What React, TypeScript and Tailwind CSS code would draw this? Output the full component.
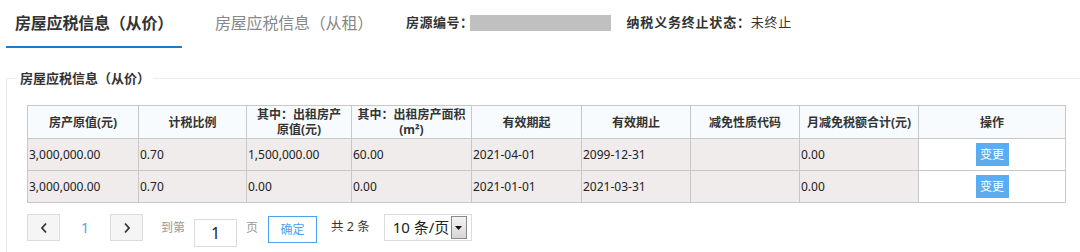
import React from "react";

const font = { fontFamily: '"Noto Sans", "Noto Sans CJK SC", sans-serif' };

const cols = [111, 108, 105, 120, 110, 109, 109, 119, 147];

const headers: React.ReactNode[] = [
  "房产原值(元)",
  "计税比例",
  <>其中：出租房产<br />原值(元)</>,
  <>其中：出租房产面积<br />(m²)</>,
  "有效期起",
  "有效期止",
  "减免性质代码",
  "月减免税额合计(元)",
  "操作",
];

const rows = [
  ["3,000,000.00", "0.70", "1,500,000.00", "60.00", "2021-04-01", "2099-12-31", "", "0.00"],
  ["3,000,000.00", "0.70", "0.00", "0.00", "2021-01-01", "2021-03-31", "", "0.00"],
];

function Chevron({ dir }: { dir: "l" | "r" }) {
  return (
    <svg width="8" height="12" viewBox="0 0 8 12">
      <path
        d={dir === "l" ? "M6 1.5 L2 6 L6 10.5" : "M2 1.5 L6 6 L2 10.5"}
        fill="none"
        stroke="#333"
        strokeWidth="1.8"
      />
    </svg>
  );
}

export default function App() {
  return (
    <div className="w-[1080px] h-[252px] overflow-hidden bg-white text-[#333]" style={font}>
      {/* Tabs */}
      <div className="flex h-[48px] items-stretch">
        <div className="ml-[6px] w-[176px] border-b-2 border-[#1a7bd0] pl-[9px] flex items-center text-[16px] font-bold text-[#333] tracking-[-0.2px]">
          房屋应税信息（从价）
        </div>
        <div className="ml-[33px] flex items-center text-[16px] text-[#888] pb-[2px] tracking-[-0.2px]">
          房屋应税信息（从租）
        </div>
        <div className="ml-[33px] flex items-center pb-[3px] text-[13px] font-bold text-[#333]">
          <span className="tracking-[0.5px]">房源编号：</span>
          <span className="ml-[-4px] inline-block w-[141px] h-[16px] bg-[#c0c0c0]" />
          <span className="ml-[16px] tracking-[0.8px]">纳税义务终止状态：<span className="font-normal">未终止</span></span>
        </div>
      </div>

      {/* Fieldset */}
      <fieldset className="mt-[20px] ml-[6px] border-t border-l border-[#ececec] pl-[20px] pt-[17px] min-w-0">
        <legend className="ml-[-10px] px-[3px] text-[13px] font-bold text-[#333] leading-[20px]">
          房屋应税信息（从价）
        </legend>
        <table className="border-collapse table-fixed text-[12px]" style={{ width: 1038 }}>
          <colgroup>
            {cols.map((w, i) => (
              <col key={i} style={{ width: w }} />
            ))}
          </colgroup>
          <thead>
            <tr className="h-[33px] bg-[#f8fbfd]">
              {headers.map((h, i) => (
                <th
                  key={i}
                  className="border border-[#c8c8c8] font-bold text-[#333] text-center align-middle leading-[15px] px-0"
                >
                  {h}
                </th>
              ))}
            </tr>
          </thead>
          <tbody>
            {rows.map((r, ri) => (
              <tr key={ri} className="h-[32px]">
                {r.map((c, ci) => (
                  <td
                    key={ci}
                    className="border border-[#c8c8c8] bg-[#f0ecec] pl-[1px] text-[#222] align-middle"
                  >
                    {c}
                  </td>
                ))}
                <td className="border border-[#c8c8c8] bg-white text-center align-middle">
                  <button className="inline-flex items-center justify-center w-[33px] h-[23px] bg-[#59adf0] text-white text-[12px]">
                    变更
                  </button>
                </td>
              </tr>
            ))}
          </tbody>
        </table>

        {/* Pagination */}
        <div className="flex items-start mt-[11px] h-[40px] text-[12px]">
          <button className="w-[33px] h-[27px] border border-[#dcdcdc] bg-[#f5f5f5] flex items-center justify-center">
            <Chevron dir="l" />
          </button>
          <span className="w-[50px] h-[27px] flex items-center justify-center text-[#4aa3f0] text-[14px]">1</span>
          <button className="w-[33px] h-[27px] border border-[#dcdcdc] bg-[#f5f5f5] flex items-center justify-center">
            <Chevron dir="r" />
          </button>
          <span className="ml-[18px] h-[27px] flex items-center text-[#999]">到第</span>
          <span className="ml-[9px] mt-[5px] w-[43px] h-[28px] border border-[#dcdcdc] flex items-center justify-center text-[16px] text-[#222]">1</span>
          <span className="ml-[9px] h-[27px] flex items-center text-[#999]">页</span>
          <button className="ml-[10px] mt-[2px] w-[49px] h-[27px] border border-[#4aa3f0] text-[#4aa3f0] text-[12px] flex items-center justify-center">
            确定
          </button>
          <span className="ml-[14px] h-[27px] flex items-center text-[#333] text-[12.5px]">共 2 条</span>
          <div className="ml-[14px] w-[88px] h-[27px] border border-[#dcdcdc] flex items-center pl-[8px] relative">
            <span className="text-[15px] text-[#222]">10 条/页</span>
            <span className="absolute right-[4px] top-[1px] w-[16px] h-[23px] border border-[#8a8a8a] bg-gradient-to-b from-[#f4f4f4] to-[#d6d6d6] flex items-center justify-center">
              <svg width="7" height="4" viewBox="0 0 7 4">
                <path d="M0 0 L7 0 L3.5 4 Z" fill="#111" />
              </svg>
            </span>
          </div>
        </div>
      </fieldset>
    </div>
  );
}
